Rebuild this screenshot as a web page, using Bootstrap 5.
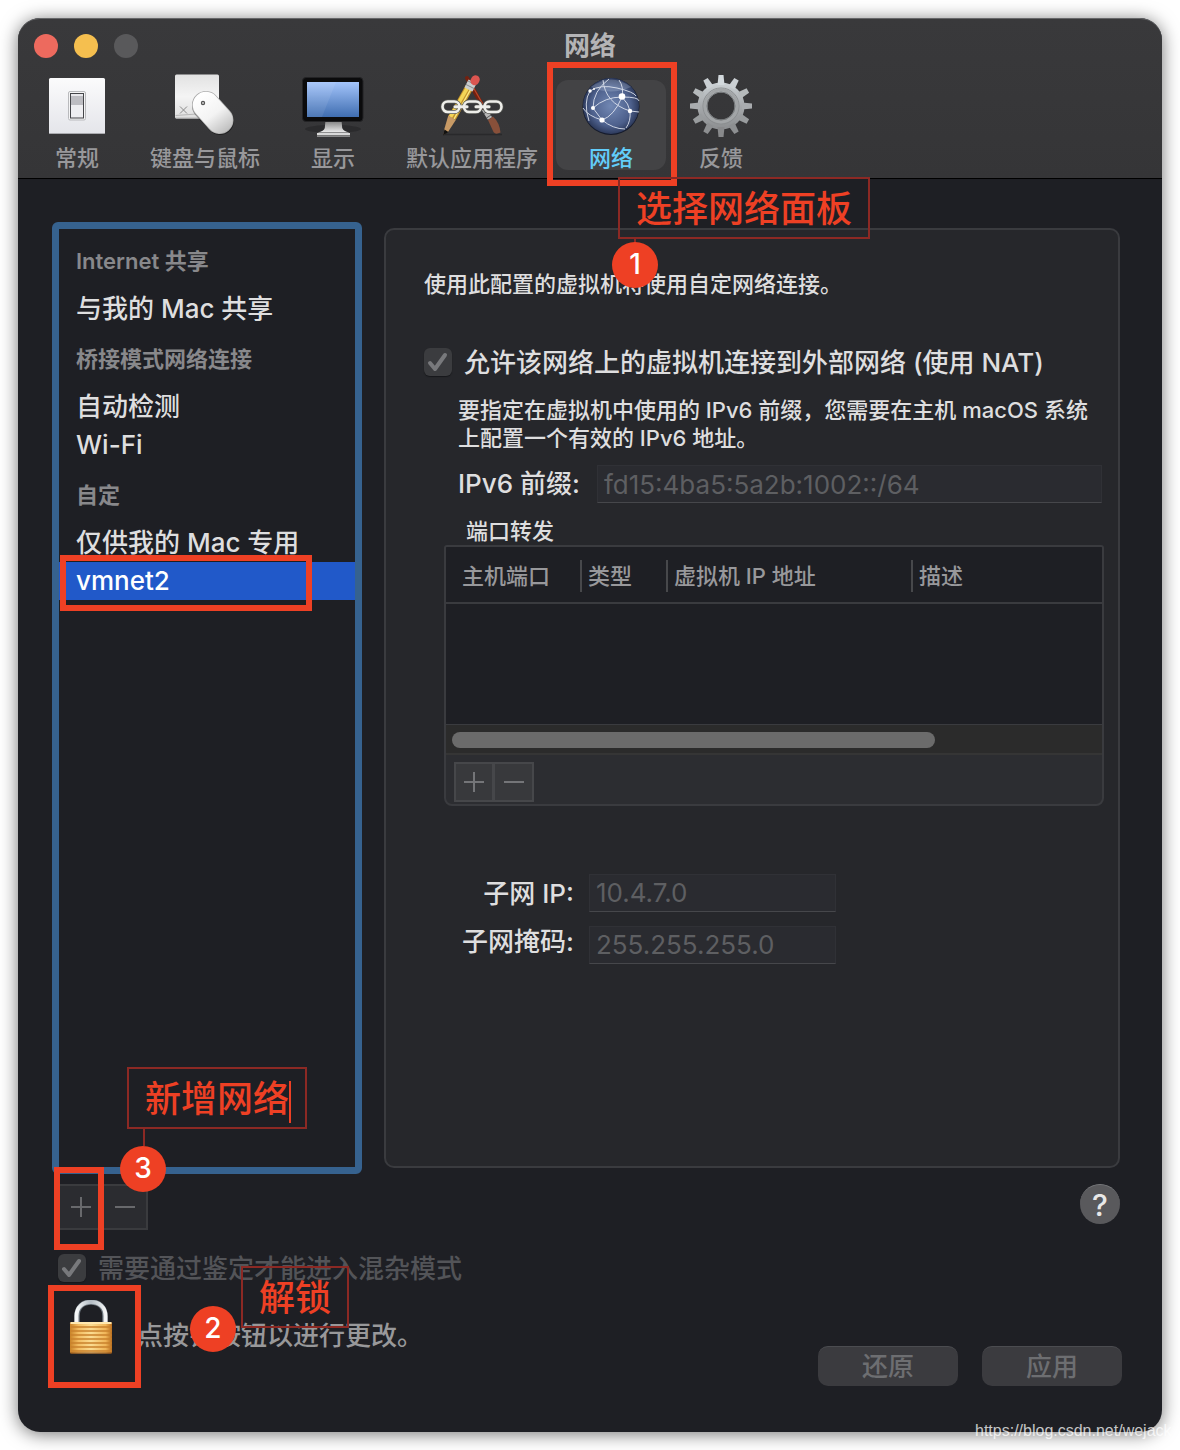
<!DOCTYPE html>
<html lang="zh-CN">
<head>
<meta charset="utf-8">
<meta name="viewport" content="width=device-width, initial-scale=1">
<title>网络</title>
<link href="https://cdn.jsdelivr.net/npm/bootstrap@5.3.0/dist/css/bootstrap.min.css" rel="stylesheet">
<style>
:root { --ink:#dededf; --dim:#98989b; --faint:#5e5f62; --base:#1e1f24; --alert:#ee4024; --edge:#3a3b3f; }
body { background:#fff; font-family:Inter,"Noto Sans CJK SC",sans-serif; font-size:26px; font-weight:500; line-height:38px; color:var(--ink); padding:18px; overflow-x:hidden; }
.win { min-height:calc(100vh - 36px); background:var(--base); border-radius:22px; box-shadow:0 2px 18px rgba(0,0,0,.55); }
.win-head { background:linear-gradient(#39393b,#353537); border-top:1px solid #666769; border-bottom:1px solid #000; border-radius:22px 22px 0 0; height:161px; }
.titlebar { height:54px; padding:0 16px; }
.light { width:24px; height:24px; border-radius:50%; border:0; padding:0; }
.light-close { background:#ed6a5e; } .light-min { background:#f5bf4f; } .light-max { background:#59595b; }
.win-title { font-size:26px; font-weight:600; color:#b4b4b6; line-height:38px; }
.tool-tabs { padding:7px 4px 0; }
.tool-tab { min-width:110px; height:90px; padding:0 18px; border:0; background:none; border-radius:12px; color:var(--dim); font-size:22px; font-weight:500; line-height:24px; }
.tool-tab svg { width:64px; height:64px; margin-top:-6px; margin-bottom:8px; display:block; }
.tool-tab.active { background:#434345; color:#62cdfa; }
.win-body { padding:43px 42px 0 34px; gap:22px; }
.net-list { width:310px; border:7px solid #36628f; border-radius:6px; padding-top:1px; }
.net-list h2 { font-size:22px; font-weight:600; color:#88888b; line-height:62px; height:60px; margin:0; padding-left:17px; }
.net-list .list-group-item { background:none; border:0; border-radius:0; color:var(--ink); padding:0 17px; height:38px; line-height:38px; }
.net-list .list-group-item.active { background:#2159c9; color:#fff; }
.detail { margin:6px 0; border:2px solid var(--edge); border-radius:10px; background:#26272b; padding:38px 14px 0 38px; min-width:0; }
.copy { font-size:22px; line-height:32px; }
.note { font-size:22px; line-height:28px; margin:20px 0 13px 34px; }
.tick { gap:12px; }
.tick .form-check-input { width:28px; height:28px; margin:0; opacity:1; border:0; border-radius:6px; background-color:#3b3c3f; box-shadow:0 1px 1px #17181b; flex:none;
  background-image:url("data:image/svg+xml,%3csvg xmlns='http://www.w3.org/2000/svg' viewBox='0 0 28 28'%3e%3cpath fill='none' stroke='%2378797c' stroke-width='4' stroke-linecap='round' stroke-linejoin='round' d='M6 15l5 6L21 7'/%3e%3c/svg%3e"); }
.tick label, .tick .form-check-input:disabled ~ label { opacity:1; line-height:26px; padding-top:2px; }
.field, .field:disabled { height:38px; border:1px solid #303136; border-bottom-color:#46474b; border-radius:0; background:#2a2b30; color:var(--faint); font-size:26px; font-weight:400; line-height:36px; padding:0 6px; }
.prefix-row { margin:0 2px 0 34px; gap:17px; }
.ports { margin-left:20px; border:2px solid var(--edge); border-radius:3px 3px 8px 8px; background:#2c2d31; overflow:hidden; }
.ports-title { font-size:22px; font-weight:500; line-height:28px; margin:14px 0 0 42px; }
.port-area { background:var(--base); min-height:177px; }
.port-table { table-layout:fixed; font-size:22px; line-height:32px; color:var(--dim); }
.port-table th { font-weight:500; padding:13px 0 10px; border-bottom:2px solid var(--edge); }
.port-table th span { display:block; padding-left:6px; border-left:2px solid #47484b; white-space:nowrap; }
.port-table th:first-child span { padding-left:16px; border:0; }
.c-port { width:134px; } .c-type { width:86px; } .c-ip { width:245px; }
.track { background:#2b2b2b; border-top:1px solid var(--edge); border-bottom:2px solid #353535; height:31px; padding:7px 6px; }
.thumb { width:75%; height:16px; border-radius:8px; background:#6b6b6b; }
.port-tools { padding:7px 8px 2px; }
.sq { border:2px solid #46474a; background:#38393c; padding:0; width:40px; height:40px; color:#747578; display:flex; align-items:center; justify-content:center; }
.sq + .sq { border-left-width:1px; }
.sq svg { width:22px; height:22px; }
.sq-lg { width:45px; height:46px; background:#2b2c30; border-color:#3a3b3e; color:#68696c; }
.subnet { margin:64px 0 0 38px; gap:15px; }
.subnet-labels { line-height:48px; text-align:right; }
.subnet-fields { gap:14px; width:247px; padding-top:1px; }
.foot { padding:10px 40px 46px; }
.help { width:40px; height:40px; border:0; border-top:1px solid #77787b; border-radius:50%; background:#59595c; color:#e8e8e8; font-size:30px; font-weight:500; line-height:38px; padding:0; margin-right:2px; }
.mixed { margin-top:24px; color:#535458; }
.bottom-row { margin-top:18px; height:86px; }
.lock { border:0; background:none; padding:0; margin-left:11px; width:44px; height:56px; display:block; }
.lock svg { display:block; }
.lock-text { margin-left:24px; color:#98989a; padding-top:17px; }
.act { width:140px; height:40px; border:0; border-top:1px solid #4b4c50; border-radius:10px; background:#3b3b3f; color:#6d6e71; font-size:26px; font-weight:500; line-height:36px; padding:0; }
/* annotations over the window */
.frame { position:absolute; border:6px solid var(--alert); z-index:3; pointer-events:none; }
.callout { position:absolute; border:2px solid #8c2924; color:var(--alert); font-size:36px; line-height:60px; height:62px; padding:0 16px; white-space:nowrap; z-index:4; }
.pin { position:absolute; width:46px; height:46px; border-radius:50%; background:var(--alert); color:#fff; font-size:28px; font-weight:500; line-height:44px; text-align:center; z-index:5; }
.stem::after { content:""; position:absolute; width:2px; height:17px; background:#8c2924; top:60px; left:14px; }
.f-tab { left:-9px; top:-18px; width:130px; height:124px; }
.c-tab { left:62px; top:97px; } .p-tab { left:56px; top:162px; }
.f-row { left:1px; top:-7px; width:252px; height:56px; }
.c-add { left:68px; bottom:38px; } .p-add { left:61px; bottom:-25px; }
.c-add { padding-right:14px; }
.caret { display:inline-block; width:2px; height:42px; background:var(--alert); vertical-align:middle; }
.f-add { left:-4px; top:-17px; width:50px; height:83px; }
.f-lock { left:-10px; top:-15px; width:93px; height:103px; }
.c-lock { left:183px; top:-34px; } .p-lock { left:132px; top:6px; }
.watermark { position:absolute; right:0; bottom:8px; width:205px; overflow:hidden; font-family:"Liberation Sans",sans-serif; font-size:16px; font-weight:400; line-height:22px; color:rgba(255,255,255,.75); white-space:nowrap; }
</style>
</head>
<body class="position-relative">
<svg width="0" height="0" class="position-absolute" aria-hidden="true"><defs>
  <linearGradient id="plate" x2="0" y2="1"><stop stop-color="#fbfbfc"/><stop offset="1" stop-color="#e4e5ea"/></linearGradient>
  <linearGradient id="keycap" x2="0" y2="1"><stop stop-color="#e2e2e2"/><stop offset=".5" stop-color="#f4f4f4"/><stop offset="1" stop-color="#dedede"/></linearGradient>
  <linearGradient id="mouse" gradientUnits="userSpaceOnUse" x1="26" y1="22" x2="54" y2="60"><stop stop-color="#fff"/><stop offset=".5" stop-color="#f3f3f3"/><stop offset="1" stop-color="#b9b9b9"/></linearGradient>
  <linearGradient id="screen" x2="0" y2="1"><stop stop-color="#a4c5fb"/><stop offset="1" stop-color="#3f6db0"/></linearGradient>
  <linearGradient id="stand" x2="0" y2="1"><stop stop-color="#777"/><stop offset="1" stop-color="#eee"/></linearGradient>
  <radialGradient id="globe" cx=".5" cy=".5" r=".55"><stop stop-color="#7288b4"/><stop offset=".65" stop-color="#4d608c"/><stop offset="1" stop-color="#222d4b"/></radialGradient>
  <linearGradient id="steel" gradientUnits="userSpaceOnUse" x1="0" y1="2" x2="0" y2="62"><stop stop-color="#d6dce0"/><stop offset=".5" stop-color="#a6a9ac"/><stop offset="1" stop-color="#858789"/></linearGradient>
  <linearGradient id="brass" x2="1" y2="0"><stop stop-color="#c98328"/><stop offset=".2" stop-color="#f3bd62"/><stop offset=".5" stop-color="#fbdc91"/><stop offset=".85" stop-color="#f0b558"/><stop offset="1" stop-color="#b86e1f"/></linearGradient>
  <linearGradient id="shackle" x2="1" y2="0"><stop stop-color="#f6f8f9"/><stop offset=".5" stop-color="#b3bcc4"/><stop offset="1" stop-color="#f4f5f6"/></linearGradient>
</defs></svg>

<main class="win d-flex flex-column">
  <header class="win-head">
    <div class="titlebar position-relative d-flex align-items-center justify-content-center">
      <div class="position-absolute start-0 d-flex gap-3 ps-3">
        <button class="light light-close" aria-label="关闭"></button>
        <button class="light light-min" aria-label="最小化"></button>
        <button class="light light-max" aria-label="缩放" disabled></button>
      </div>
      <h1 class="win-title m-0">网络</h1>
    </div>
    <nav class="tool-tabs d-flex">
      <button class="tool-tab d-flex flex-column align-items-center">
        <svg viewBox="0 0 64 64"><rect x="4" y="4" width="56" height="56" rx="1.5" fill="url(#plate)"/><path d="M4.500 59.500h55" stroke="#aaabaf"/><rect x="23.500" y="17.500" width="17" height="28.500" rx="1.500" fill="#f4f4f5" stroke="#b9babd"/><rect x="25.500" y="19.500" width="13" height="24.500" fill="#eeeef1" stroke="#444549"/><path d="M26 22h12v9H26z" fill="#bdbdc2"/><path d="M26 20h12v2H26z" fill="#e8e8ec"/></svg>
        <span>常规</span></button>
      <button class="tool-tab d-flex flex-column align-items-center">
        <svg viewBox="0 0 64 64"><rect x="2" y=".5" width="44" height="44" rx="1.500" fill="url(#keycap)"/><path d="M2.500 41.500q21-3 43 0M3 44h42" fill="none" stroke="#b7b7b7"/><path d="M7 32.500l7 7m0-7l-7 7" stroke="#8a8a8a" stroke-width="1"/><path d="M33 32L47 47" stroke="#000" stroke-opacity=".4" stroke-width="28" stroke-linecap="round"/><path d="M33 31L46.500 46" stroke="#adadad" stroke-width="28" stroke-linecap="round"/><path d="M33 31L46.500 46" stroke="url(#mouse)" stroke-width="26.500" stroke-linecap="round"/><circle cx="30" cy="29" r="2.200" fill="#555"/><circle cx="30" cy="29" r=".9" fill="#ddd"/></svg>
        <span>键盘与鼠标</span></button>
      <button class="tool-tab d-flex flex-column align-items-center">
        <svg viewBox="0 0 64 64"><ellipse cx="32" cy="55" rx="28" ry="4" fill="#2b2b2d"/><path d="M24.500 46h16l.7 8q1 3 7.300 4.500h-32q6.500-1.500 7.300-4.500z" fill="url(#stand)"/><path d="M16 59h33v3.500H16z" fill="#d9d9d9"/><path d="M16 61.500h33" stroke="#777"/><rect x="1.500" y="3.500" width="60.500" height="44" rx="3.500" fill="#0b0b0c" stroke="#232325"/><rect x="6" y="8" width="52" height="35" fill="url(#screen)"/><path d="M6 8h29L21 43H6z" fill="#fff" opacity=".08"/></svg>
        <span>显示</span></button>
      <button class="tool-tab d-flex flex-column align-items-center">
        <svg viewBox="0 0 64 64"><path d="M4 60.500h58" stroke="#29292b" stroke-width="1.500"/><path d="M27 4L45 36" stroke="#74200f" stroke-width="4" stroke-linecap="round"/><path d="M29 6L45 34" stroke="#b9472a" stroke-width="1.200"/><path d="M44 35l6 9.500" stroke="#b8b8b8" stroke-width="5"/><path d="M48 37l-4 2.500m7 1.500l-4.500 3" stroke="#555"/><path d="M48 46l5-3.500q6.500 6 7.500 16-5 2.500-7-.5z" fill="#88503a"/><path d="M30 12L12 44" stroke="#c2912b" stroke-width="8.500"/><path d="M28.500 12L10.500 43" stroke="#f3d557" stroke-width="3.500"/><path d="M32 13L14 45" stroke="#fbe983" stroke-width="1.500"/><path d="M8.300 41.500l7.500 4.500-7.500 11.500L3.500 61l1-6.500z" fill="#c89a65"/><path d="M4.500 55.500L3 61.500l5.500-3.500z" fill="#111"/><path d="M32.500 7.500l-4 8" stroke="#c9cccd" stroke-width="9"/><path d="M28 7l8 4m-10-.5l8 4" stroke="#85898b"/><path d="M35.500 5.500l-.8 1.500" stroke="#dc5550" stroke-width="8.500" stroke-linecap="round"/><g fill="none"><g stroke="#555652" stroke-width="4"><rect x="2.500" y="27.500" width="17" height="10.500" rx="5.200"/><rect x="24" y="27.500" width="17" height="10.500" rx="5.200"/><rect x="44.500" y="27.500" width="17" height="10.500" rx="5.200"/><path d="M15 32.700h12m9 0h13" stroke-linecap="round"/></g><g stroke="#eeeeea" stroke-width="2.600"><rect x="2.500" y="27.500" width="17" height="10.500" rx="5.200"/><rect x="24" y="27.500" width="17" height="10.500" rx="5.200"/><rect x="44.500" y="27.500" width="17" height="10.500" rx="5.200"/><path d="M15 32.700h12m9 0h13" stroke-width="3" stroke-linecap="round"/></g></g></svg>
        <span>默认应用程序</span></button>
      <div class="position-relative">
        <button class="tool-tab active d-flex flex-column align-items-center">
          <svg viewBox="0 0 64 64"><circle cx="32" cy="32.500" r="28.500" fill="#141a2b"/><circle cx="32" cy="32" r="28" fill="url(#globe)"/><path d="M12 13Q32-2 52 13 32 22 12 13z" fill="#d8e2f4" opacity=".22"/><g fill="none" stroke="#e6ebf5" stroke-width="1" opacity=".85"><path d="M14 34Q26 23 43 23T60 27"/><path d="M14 34Q14 17 30 5"/><path d="M14 34Q20 42 23 46 35 42 43 23 45 13 40 6"/><path d="M23 46Q9 42 4 34"/><path d="M23 46Q34 55 46 55"/><path d="M43 23Q50 30 51 37 52 47 47 54"/><path d="M24 6Q26 29 51 37L60 38"/><path d="M11 17Q21 10 38 14T57 22"/><path d="M11 17Q4 28 10 47"/></g><g fill="#fff"><circle cx="43" cy="22.500" r="3.300"/><circle cx="14" cy="34" r="2"/><circle cx="23" cy="46" r="2.600"/><circle cx="51" cy="37" r="2.200"/><circle cx="11" cy="17" r="1.700"/><circle cx="15" cy="15" r="1"/></g></svg>
          <span>网络</span></button>
        <div class="frame f-tab"></div>
        <div class="callout stem c-tab">选择网络面板</div>
        <div class="pin p-tab">1</div>
      </div>
      <button class="tool-tab d-flex flex-column align-items-center">
        <svg viewBox="0 0 64 64"><defs><path id="tooth" d="M28.500 11L29.500 1h5l1 10z"/></defs><circle cx="32" cy="32" r="18.500" fill="none" stroke="url(#steel)" stroke-width="10"/><g fill="#b5b9bb"><use href="#tooth" fill="#d3d9dd"/><use href="#tooth" transform="rotate(30 32 32)" fill="#cbd0d4"/><use href="#tooth" transform="rotate(60 32 32)"/><use href="#tooth" transform="rotate(90 32 32)" fill="#a9acaf"/><use href="#tooth" transform="rotate(120 32 32)" fill="#999c9e"/><use href="#tooth" transform="rotate(150 32 32)" fill="#8d8f91"/><use href="#tooth" transform="rotate(180 32 32)" fill="#88898b"/><use href="#tooth" transform="rotate(210 32 32)" fill="#8d8f91"/><use href="#tooth" transform="rotate(240 32 32)" fill="#999c9e"/><use href="#tooth" transform="rotate(270 32 32)" fill="#a9acaf"/><use href="#tooth" transform="rotate(300 32 32)"/><use href="#tooth" transform="rotate(330 32 32)" fill="#cbd0d4"/></g><circle cx="32" cy="32" r="18" fill="none" stroke="#8b8e90" stroke-width="1"/><circle cx="32" cy="32" r="16" fill="none" stroke="#a2a5a7" stroke-width="3"/><circle cx="32" cy="32" r="14" fill="none" stroke="#717476"/></svg>
        <span>反馈</span></button>
    </nav>
  </header>

  <section class="win-body d-flex flex-grow-1">
    <aside class="net-list position-relative flex-shrink-0">
      <h2>Internet 共享</h2>
      <div class="list-group"><a href="#" class="list-group-item">与我的 Mac 共享</a></div>
      <h2>桥接模式网络连接</h2>
      <div class="list-group"><a href="#" class="list-group-item">自动检测</a><a href="#" class="list-group-item">Wi-Fi</a></div>
      <h2>自定</h2>
      <div class="list-group"><a href="#" class="list-group-item">仅供我的 Mac 专用</a>
        <div class="position-relative"><a href="#" class="list-group-item active m-0" aria-current="true">vmnet2</a><div class="frame f-row"></div></div></div>
      <div class="callout stem c-add">新增网络<span class="caret"></span></div>
      <div class="pin p-add">3</div>
    </aside>

    <article class="detail flex-grow-1">
      <p class="copy m-0">使用此配置的虚拟机将使用自定网络连接。</p>
      <div class="tick d-flex align-items-center mt-5">
        <input class="form-check-input" type="checkbox" id="nat" checked disabled>
        <label for="nat">允许该网络上的虚拟机连接到外部网络 (使用 NAT)</label>
      </div>
      <p class="note">要指定在虚拟机中使用的 IPv6 前缀，您需要在主机 macOS 系统上配置一个有效的 IPv6 地址。</p>
      <div class="prefix-row d-flex">
        <label for="prefix" class="text-nowrap">IPv6 前缀:</label>
        <input id="prefix" class="field form-control" value="fd15:4ba5:5a2b:1002::/64" disabled>
      </div>
      <h2 class="ports-title" id="ports-title">端口转发</h2>
      <div class="ports">
        <div class="port-area">
          <table class="port-table w-100" aria-labelledby="ports-title">
            <thead><tr><th class="c-port"><span>主机端口</span></th><th class="c-type"><span>类型</span></th><th class="c-ip"><span>虚拟机 IP 地址</span></th><th><span>描述</span></th></tr></thead>
            <tbody></tbody>
          </table>
        </div>
        <div class="track"><div class="thumb"></div></div>
        <div class="port-tools d-flex">
          <button class="sq" disabled aria-label="添加端口"><svg viewBox="0 0 22 22"><path d="M1 11h20M11 1v20" stroke="currentColor" stroke-width="2"/></svg></button>
          <button class="sq" disabled aria-label="移除端口"><svg viewBox="0 0 22 22"><path d="M1 11h20" stroke="currentColor" stroke-width="2"/></svg></button>
        </div>
      </div>
      <div class="subnet d-flex align-items-center">
        <div class="subnet-labels d-flex flex-column"><label for="ip">子网 IP:</label><label for="netmask">子网掩码:</label></div>
        <div class="subnet-fields d-flex flex-column"><input id="ip" class="field form-control" value="10.4.7.0" disabled><input id="netmask" class="field form-control" value="255.255.255.0" disabled></div>
      </div>
    </article>
  </section>

  <footer class="foot">
    <div class="d-flex justify-content-between">
      <div class="position-relative d-flex">
        <button class="sq sq-lg" aria-label="添加网络"><svg viewBox="0 0 22 22"><path d="M1 11h20M11 1v20" stroke="currentColor" stroke-width="2"/></svg></button>
        <button class="sq sq-lg" aria-label="移除网络"><svg viewBox="0 0 22 22"><path d="M1 11h20" stroke="currentColor" stroke-width="2"/></svg></button>
        <div class="frame f-add"></div>
      </div>
      <button class="help" aria-label="帮助">?</button>
    </div>
    <div class="mixed tick d-flex align-items-center">
      <input class="form-check-input" type="checkbox" id="promisc" checked disabled>
      <label for="promisc">需要通过鉴定才能进入混杂模式</label>
    </div>
    <div class="bottom-row d-flex justify-content-between">
      <div class="position-relative d-flex align-items-start">
        <button class="lock" aria-label="锁"><svg viewBox="0 0 44 56" width="44" height="56"><path d="M8 25V16C8 7 14 2 22 2s14 5 14 14v9" fill="none" stroke="#6c757d" stroke-width="5.500"/><path d="M7.500 25V16C7.500 7 14 2 22 2s14.500 5 14.500 14v9" fill="none" stroke="url(#shackle)" stroke-width="4"/><rect x="1" y="22" width="42" height="31.500" rx="1.500" fill="url(#brass)"/><path d="M1.500 23h41" stroke="#ffe8ae" stroke-width="2"/><path d="M1.500 27h41m-41 4h41m-41 4h41m-41 4h41m-41 4h41m-41 4h41m-41 4h41" stroke="#c9812d" stroke-width="1.300"/><path d="M1.500 53h41" stroke="#8a4b14"/></svg></button>
        <span class="lock-text">点按锁按钮以进行更改。</span>
        <div class="frame f-lock"></div>
        <div class="callout c-lock">解锁</div>
        <div class="pin p-lock">2</div>
      </div>
      <div class="d-flex gap-4 align-items-end">
        <button class="act" disabled>还原</button><button class="act" disabled>应用</button>
      </div>
    </div>
  </footer>
</main>
<div class="watermark">https://blog.csdn.net/wejack</div>
<script src="https://cdn.jsdelivr.net/npm/bootstrap@5.3.0/dist/js/bootstrap.bundle.min.js"></script>
</body>
</html>
